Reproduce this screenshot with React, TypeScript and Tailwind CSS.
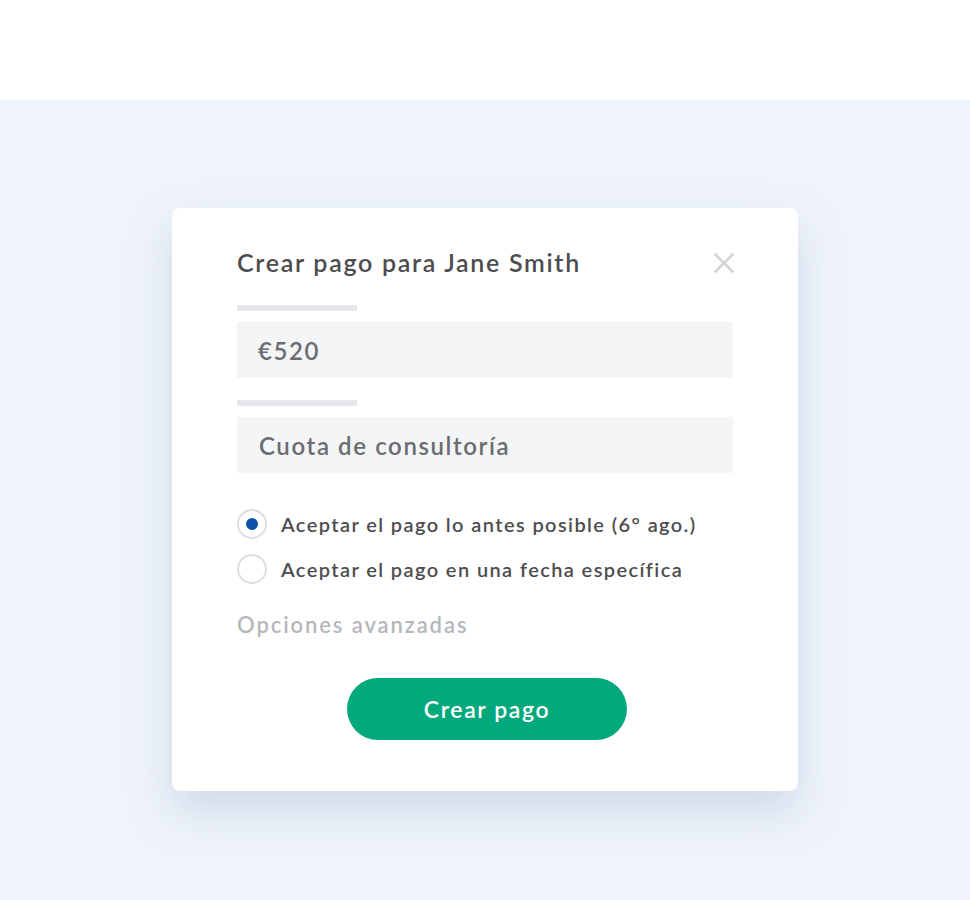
const font = { fontFamily: "Lato, 'Noto Sans', sans-serif" };

function Radio({ checked, label }: { checked?: boolean; label: string }) {
  return (
    <label className="flex items-center gap-[14px] h-[30px]">
      <span className="w-[30px] h-[30px] rounded-full border-2 border-[#dcdee2] bg-white flex items-center justify-center shrink-0">
        {checked && <span className="w-[12px] h-[12px] rounded-full bg-[#0f4fa8]" />}
      </span>
      <span className="text-[20px] font-semibold text-[#4d4d4f] tracking-[1.4px]">{label}</span>
    </label>
  );
}

export default function App() {
  return (
    <div className="w-[970px] h-[900px] bg-white flex flex-col" style={font}>
      <div className="h-[100px] bg-white" />
      <div className="flex-1 bg-[#eff4fb] pt-[108px] flex justify-center">
        <div className="w-[626px] h-[583px] bg-white rounded-[8px] shadow-[0_20px_40px_rgba(150,170,200,0.35)] pl-[65px] pr-[65px] pt-[38px]">
          {/* Header */}
          <div className="flex items-center justify-between h-[34px]">
            <h2 className="text-[25px] font-semibold text-[#4d4d4f] tracking-[1.7px]">Crear pago para Jane Smith</h2>
            <svg width="20" height="20" viewBox="0 0 20 20" className="mr-[-1px]">
              <path d="M1.5 1.5 L18.5 18.5 M18.5 1.5 L1.5 18.5" stroke="#d3d4d7" strokeWidth="2.6" strokeLinecap="round" />
            </svg>
          </div>

          {/* Amount */}
          <div className="mt-[25px] w-[120px] h-[6px] bg-[#e6e7ea]" />
          <div className="mt-[11px] h-[56px] bg-[#f4f5f7] flex items-center px-[21px] pt-[2px]">
            <span className="text-[24px] font-semibold text-[#6b6c6f] tracking-[1.6px]">€520</span>
          </div>

          {/* Description */}
          <div className="mt-[22px] w-[120px] h-[6px] bg-[#e6e7ea]" />
          <div className="mt-[11px] h-[56px] bg-[#f4f5f7] flex items-center px-[22px] pt-[2px]">
            <span className="text-[24px] font-semibold text-[#6b6c6f] tracking-[1.6px]">Cuota de consultoría</span>
          </div>

          {/* Options */}
          <div className="mt-[36px] flex flex-col gap-[15px]">
            <Radio checked label="Aceptar el pago lo antes posible (6° ago.)" />
            <Radio label="Aceptar el pago en una fecha específica" />
          </div>

          <div className="mt-[24px] text-[22px] font-semibold text-[#b6b7ba] tracking-[1.9px]">Opciones avanzadas</div>

          <div className="mt-[37px] flex justify-center pl-[4px]">
            <button className="w-[280px] h-[62px] rounded-full bg-[#03a87c] text-white text-[23px] font-semibold tracking-[1.6px]">
              Crear pago
            </button>
          </div>
        </div>
      </div>
    </div>
  );
}
